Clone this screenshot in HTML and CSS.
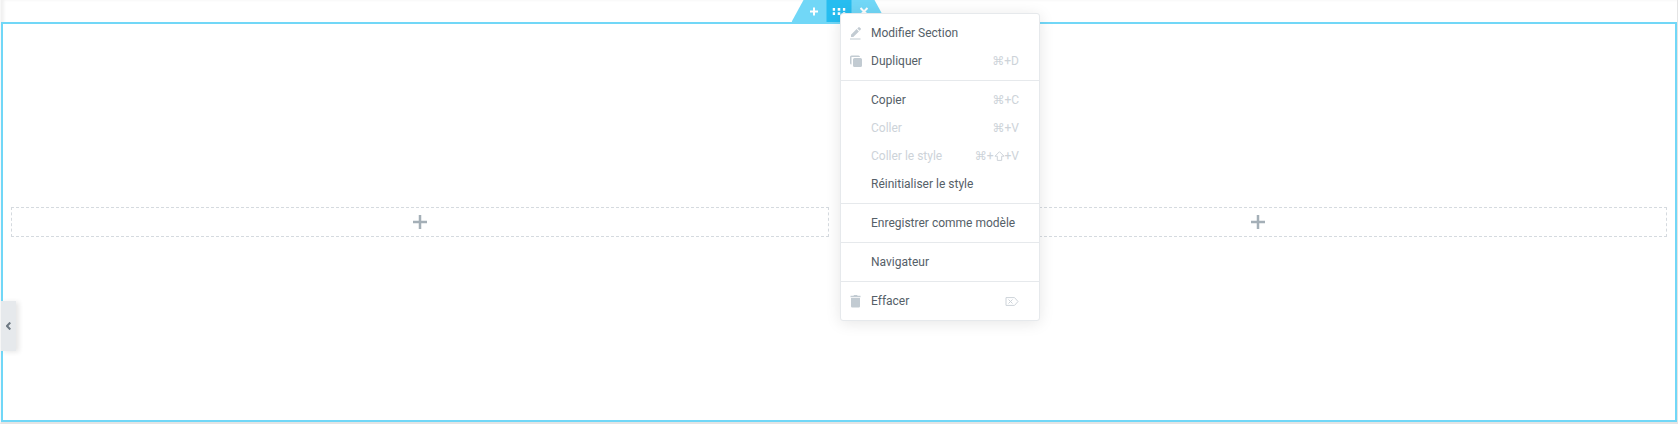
FILE: index.html
```html
<!DOCTYPE html>
<html lang="fr">
<head>
  <meta charset="UTF-8" />
  <meta name="viewport" content="width=device-width, initial-scale=1.0"/>
  <title>Section</title>
  <link rel="stylesheet" href="styles.css">
</head>
<body>

  <main class="preview">
    <section class="section">
      <div class="section-tabs">
        <button class="tab tab-add" aria-label="Ajouter">
          <svg width="9" height="9" viewBox="0 0 9 9"><path d="M4.5 0.5v8M0.5 4.5h8"/></svg>
        </button>
        <button class="tab tab-edit" aria-label="Modifier">
          <svg width="13" height="7" viewBox="0 0 13 7"><path d="M0 1.3h2.6M5.2 1.3h2.6M10.4 1.3H13M0 5.7h2.6M5.2 5.7h2.6M10.4 5.7H13"/></svg>
        </button>
        <button class="tab tab-remove" aria-label="Supprimer">
          <svg width="9" height="9" viewBox="0 0 9 9"><path d="M1 1l7 7M8 1L1 8"/></svg>
        </button>
      </div>

      <div class="column">
        <button class="drop-zone" aria-label="Ajouter un widget">
          <svg width="14" height="14" viewBox="0 0 14 14"><path d="M7 0v14M0 7h14"/></svg>
        </button>
      </div>
      <div class="column">
        <button class="drop-zone" aria-label="Ajouter un widget">
          <svg width="14" height="14" viewBox="0 0 14 14"><path d="M7 0v14M0 7h14"/></svg>
        </button>
      </div>

      <div class="menu">
        <div class="menu-group">
          <button class="menu-item">
            <svg class="icon" width="12" height="13" viewBox="0 0 12 13"><path d="M1 10V7.700L6.600 2.100l2.300 2.300L3.300 10zM7.300 1.400L8.300.4a1 1 0 0 1 1.400 0l.9.9a1 1 0 0 1 0 1.400l-1 1zM0 11.500h10.500v1H0z"/></svg>
            <span class="label">Modifier Section</span>
          </button>
          <button class="menu-item">
            <svg class="icon" width="12" height="13" viewBox="0 0 12 13"><path d="M1.500.5h7A1.500 1.500 0 0 1 10 2H1.500v7.500A1.500 1.500 0 0 1 0 8V2A1.500 1.500 0 0 1 1.500.5zM4.500 3h6A1.500 1.500 0 0 1 12 4.500v6a1.500 1.500 0 0 1-1.500 1.500h-6A1.500 1.500 0 0 1 3 10.500v-6A1.500 1.500 0 0 1 4.500 3z"/></svg>
            <span class="label">Dupliquer</span>
            <span class="shortcut">⌘+D</span>
          </button>
        </div>
        <div class="menu-group">
          <button class="menu-item">
            <span class="icon"></span>
            <span class="label">Copier</span>
            <span class="shortcut">⌘+C</span>
          </button>
          <button class="menu-item" disabled>
            <span class="icon"></span>
            <span class="label">Coller</span>
            <span class="shortcut">⌘+V</span>
          </button>
          <button class="menu-item" disabled>
            <span class="icon"></span>
            <span class="label">Coller le style</span>
            <span class="shortcut">⌘+<svg class="key" width="11" height="10" viewBox="0 0 11 10"><path d="M5.500.7L10 5.200H7.700v4.200H3.300V5.200H1z"/></svg>+V</span>
          </button>
          <button class="menu-item">
            <span class="icon"></span>
            <span class="label">Réinitialiser le style</span>
          </button>
        </div>
        <div class="menu-group">
          <button class="menu-item">
            <span class="icon"></span>
            <span class="label">Enregistrer comme modèle</span>
          </button>
        </div>
        <div class="menu-group">
          <button class="menu-item">
            <span class="icon"></span>
            <span class="label">Navigateur</span>
          </button>
        </div>
        <div class="menu-group">
          <button class="menu-item">
            <svg class="icon" width="12" height="13" viewBox="0 0 12 13"><path d="M.5.8h2.900L4.100 0h2.900l.7.800h2.800v1.400H.5zM1 3h9v8.300a1.200 1.200 0 0 1-1.200 1.200H2.200A1.200 1.200 0 0 1 1 11.300z"/></svg>
            <span class="label">Effacer</span>
            <span class="shortcut"><svg class="key" width="14" height="9" viewBox="0 0 14 9"><path d="M1 .6h8.500L13 4.500 9.500 8.400H1zM3.500 2.500l4 4M7.500 2.500l-4 4"/></svg></span>
          </button>
        </div>
      </div>
    </section>
  </main>

  <button class="panel-toggle" aria-label="Masquer le panneau">
    <svg width="5" height="8" viewBox="0 0 5 8"><path d="M4.300.5L1 4l3.300 3.500"/></svg>
  </button>

</body>
</html>
```
FILE: styles.css
```css
* {
  box-sizing: border-box;
}

body {
  margin: 0;
  background: #fff;
  font-family: Roboto, "DejaVu Sans", Arial, sans-serif;
}

button {
  border: none;
  padding: 0;
  background: none;
  font: inherit;
  cursor: pointer;
}

.preview {
  display: flex;
  min-height: 100vh;
  padding-top: 22px;
  border: solid #e4e4e4;
  border-width: 0 1px 2px;
  border-left-color: #f8f8f8;
  box-shadow: inset 3px 0 3px rgba(0, 0, 0, 0.06);
}

/* section with its blue outline */
.section {
  position: relative;
  flex: 1;
  display: flex;
  align-items: center;
  outline: 2px solid #71d7f7;
  outline-offset: -2px;
  background: #fff;
}

.section-tabs {
  position: absolute;
  bottom: 100%;
  left: 50%;
  display: flex;
  height: 22px;
  padding: 0 10px;
  background: #71d7f7;
  clip-path: polygon(12px 0, calc(100% - 12px) 0, 100% 100%, 0 100%);
  transform: translateX(-50%);
}

.tab {
  display: flex;
  align-items: center;
  justify-content: center;
  width: 25px;
}

.tab svg {
  fill: none;
  stroke: #fff;
  stroke-width: 2;
}

.tab-edit {
  background: #26bdf0;
}

.tab-edit svg {
  stroke-width: 3;
}

.column {
  flex: 1;
  padding: 10px;
}

.drop-zone {
  display: flex;
  align-items: center;
  justify-content: center;
  width: 100%;
  height: 30px;
  border: 1px dashed #d5dadf;
}

.drop-zone svg {
  fill: none;
  stroke: #a4afb7;
  stroke-width: 2.5;
}

/* context menu */
.menu {
  position: absolute;
  top: -9px;
  left: calc(50% + 1px);
  width: 200px;
  background: #fff;
  border: 1px solid #e6e9ec;
  border-radius: 3px;
  box-shadow: 0 2px 15px rgba(0, 0, 0, 0.1);
}

.menu-group {
  padding: 5px 0;
}

.menu-group + .menu-group {
  border-top: 1px solid #e6e9ec;
}

.menu-item {
  display: flex;
  align-items: center;
  width: 100%;
  height: 28px;
  padding: 0 20px 0 9px;
  color: #556068;
  font-size: 12px;
  text-align: left;
}

.menu-item:disabled {
  color: #cdd3d9;
  cursor: default;
}

.icon {
  width: 12px;
  margin-right: 9px;
  fill: #c2cbd2;
}

.label {
  flex: 1;
  white-space: nowrap;
}

.shortcut {
  display: flex;
  align-items: center;
  color: #cdd3d9;
}

.key {
  fill: none;
  stroke: #cdd3d9;
}

.panel-toggle {
  position: absolute;
  top: 301px;
  left: 1px;
  display: flex;
  align-items: center;
  justify-content: center;
  width: 15px;
  height: 50px;
  background: #e6e9ec;
  box-shadow: 3px 1px 5px rgba(0, 0, 0, 0.1);
}

.panel-toggle svg {
  fill: none;
  stroke: #6d7882;
  stroke-width: 2;
}
```
